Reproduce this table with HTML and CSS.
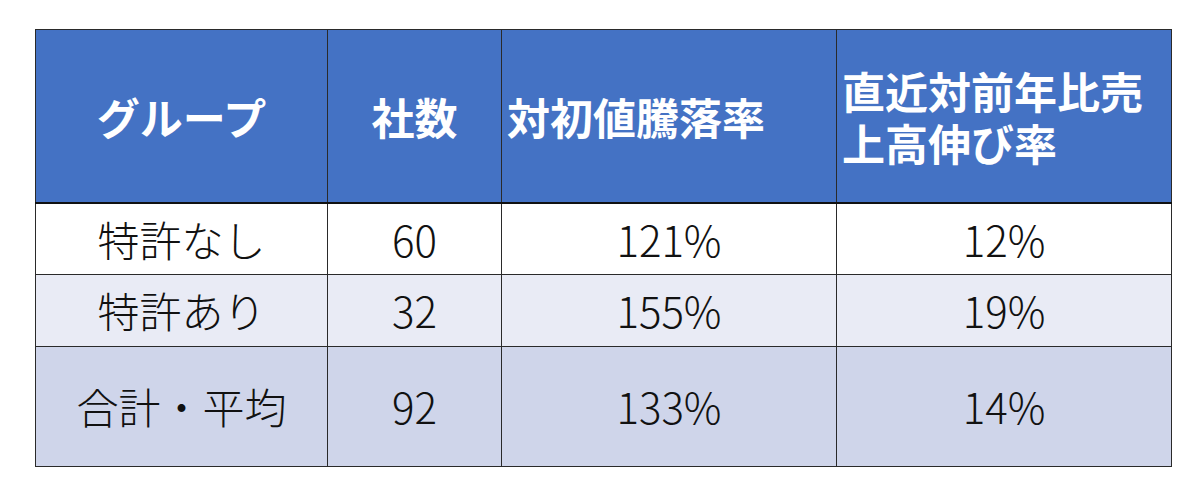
FILE: index.html
```html
<!DOCTYPE html>
<html lang="ja">
<head>
<meta charset="utf-8">
<link rel="stylesheet" href="styles.css">
</head>
<body>
<table class="stats">
  <colgroup>
    <col class="c1"><col class="c2"><col class="c3"><col class="c4">
  </colgroup>
  <thead>
    <tr class="head">
      <th class="center">グループ</th>
      <th class="center">社数</th>
      <th class="left">対初値騰落率</th>
      <th class="left">直近対前年比売<br>上高伸び率</th>
    </tr>
  </thead>
  <tbody>
    <tr class="row r1">
      <td>特許なし</td><td>60</td><td>121%</td><td>12%</td>
    </tr>
    <tr class="row r2">
      <td>特許あり</td><td>32</td><td>155%</td><td>19%</td>
    </tr>
    <tr class="row r3">
      <td>合計・平均</td><td>92</td><td>133%</td><td>14%</td>
    </tr>
  </tbody>
</table>
</body>
</html>
```

FILE: styles.css
```css
html, body {
  margin: 0;
  padding: 0;
  background: #ffffff;
}

body {
  padding: 29px 0 0 35px;
  font-family: "Noto Sans CJK JP", "Noto Sans", sans-serif;
}

.stats {
  border-collapse: collapse;
  table-layout: fixed;
  width: 1136px;
  border: 1px solid #2a2a2a;
}

.c1 { width: 292px; }
.c2 { width: 174px; }
.c3 { width: 335px; }
.c4 { width: 335px; }

.stats th,
.stats td {
  border: 1px solid #2a2a2a;
  padding: 0;
  vertical-align: middle;
}

.head {
  height: 173px;
  background: #4472c4;
}

.head th {
  color: #ffffff;
  font-weight: 700;
  font-size: 43px;
  line-height: 52px;
  border-bottom: 2px solid #111111;
}

.head th.center { text-align: center; }
.head th.left { text-align: left; padding-left: 5px; }

.row td {
  font-size: 42px;
  font-weight: 300;
  color: #111111;
  text-align: center;
  line-height: 1.2;
}

.r1 { height: 72px; background: #ffffff; }
.r2 { height: 72px; background: #e9ebf5; }
.r3 { height: 120px; background: #cfd5ea; }
```
